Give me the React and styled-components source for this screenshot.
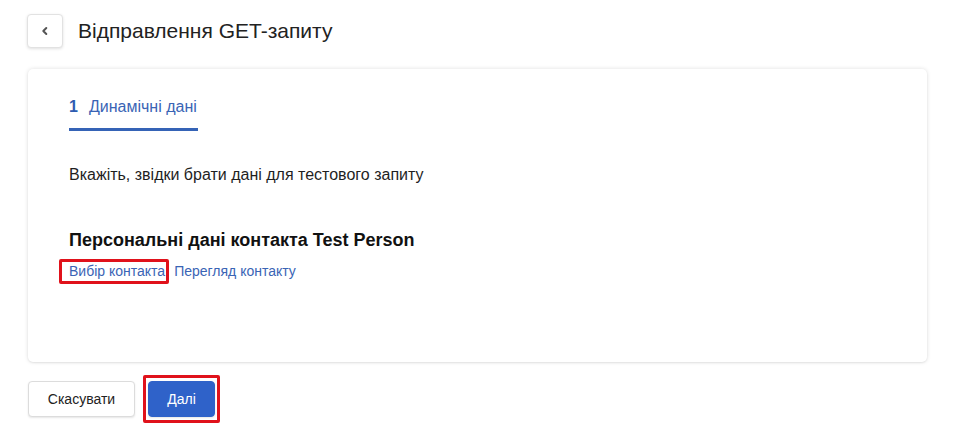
import React from "react";
import styled, { createGlobalStyle } from "styled-components";

const Global = createGlobalStyle`
  html, body { margin: 0; padding: 0; background: #fff; }
  body { font-family: "Liberation Sans", Arial, sans-serif; color: #1f1f1f; }
`;

const Page = styled.div`
  padding: 14px 28px 0 28px;
  display: flex;
  flex-direction: column;
`;

const Header = styled.div`
  display: flex;
  align-items: center;
  gap: 15px;
  margin-left: -1px;
  height: 34px;
`;

const BackButton = styled.button`
  width: 36px;
  height: 34px;
  border: 1px solid #e2e2e2;
  border-radius: 4px;
  background: #fff;
  box-shadow: 0 1px 3px rgba(0,0,0,0.12);
  display: flex;
  align-items: center;
  justify-content: center;
  padding: 0;
  color: #555;
`;

const Title = styled.h1`
  margin: 0;
  font-size: 21px;
  font-weight: 400;
  color: #222;
`;

const Card = styled.div`
  margin-top: 21px;
  height: 293px;
  box-sizing: border-box;
  background: #fff;
  border-radius: 5px;
  box-shadow: 0 0 4px rgba(0,0,0,0.13), 0 1px 2px rgba(0,0,0,0.06);
  padding: 27px 41px 0 41px;
`;

const Tab = styled.div`
  display: inline-flex;
  align-items: center;
  gap: 11px;
  height: 22px;
  padding-bottom: 10px;
  border-bottom: 3px solid #3563b6;
  width: 129px;
  font-size: 16px;
  color: #3a64b5;
  white-space: nowrap;
`;

const TabNum = styled.span`
  font-weight: 700;
  font-size: 16px;
  color: #2d5bb0;
`;

const Hint = styled.p`
  margin: 34px 0 0 0;
  font-size: 16px;
  color: #1f1f1f;
  line-height: 19px;
`;

const Heading = styled.h2`
  margin: 45px 0 0 0;
  font-size: 18px;
  font-weight: 700;
  line-height: 22px;
  color: #111;
`;

const Links = styled.div`
  display: flex;
  align-items: center;
  gap: 5px;
  margin-top: 8px;
  margin-left: -10px;
`;

const Link = styled.a`
  font-size: 14px;
  color: #3a64b5;
  text-decoration: none;
  line-height: 17px;
  white-space: nowrap;
  box-sizing: border-box;
  display: inline-flex;
  align-items: center;
  ${(p) => p.$highlight ? `
    border: 3px solid #e0121b;
    border-radius: 2px;
    padding: 1px 1px 1px 7px;
    height: 25px;
  ` : ``}
`;

const Footer = styled.div`
  display: flex;
  align-items: center;
  gap: 8px;
  margin-top: 13px;
`;

const Button = styled.button`
  font-family: "Liberation Sans", Arial, sans-serif;
  font-size: 14px;
  height: 36px;
  border-radius: 4px;
  padding: 0;
  cursor: pointer;
  border: 1px solid ${(p) => (p.$primary ? "#2f62c9" : "#dcdcdc")};
  background: ${(p) => (p.$primary ? "#2f62c9" : "#fff")};
  color: ${(p) => (p.$primary ? "#fff" : "#222")};
  box-shadow: 0 1px 2px rgba(0,0,0,0.1);
  width: ${(p) => (p.$primary ? "67px" : "107px")};
`;

const Highlight = styled.div`
  border: 3px solid #e0121b;
  border-radius: 2px;
  padding: 3px 2px;
  display: flex;
`;

export default function App() {
  return (
    <>
      <Global />
      <Page>
        <Header>
          <BackButton aria-label="back">
            <svg width="10" height="10" viewBox="0 0 10 10">
              <path d="M6.3 2 L3.3 5 L6.3 8" fill="none" stroke="#555" strokeWidth="2" strokeLinecap="round" strokeLinejoin="round" />
            </svg>
          </BackButton>
          <Title>Відправлення GET-запиту</Title>
        </Header>
        <Card>
          <Tab>
            <TabNum>1</TabNum>
            <span>Динамічні дані</span>
          </Tab>
          <Hint>Вкажіть, звідки брати дані для тестового запиту</Hint>
          <Heading>Персональні дані контакта Test Person</Heading>
          <Links>
            <Link $highlight href="#">Вибір контакта</Link>
            <Link href="#">Перегляд контакту</Link>
          </Links>
        </Card>
        <Footer>
          <Button>Скасувати</Button>
          <Highlight>
            <Button $primary>Далі</Button>
          </Highlight>
        </Footer>
      </Page>
    </>
  );
}
